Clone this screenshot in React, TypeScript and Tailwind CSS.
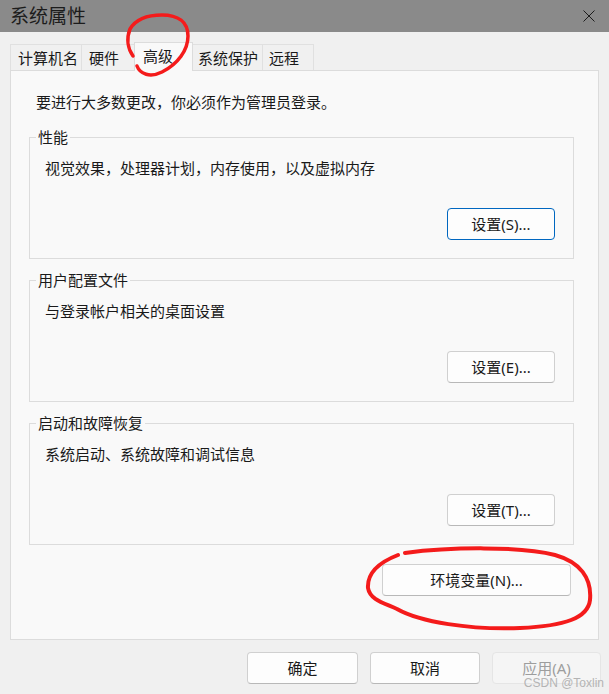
const font = "font-['Noto_Sans','Noto_Sans_CJK_SC',sans-serif]";

const tabs = [
  { label: "计算机名", w: "w-[72px] pl-[7px]", active: false },
  { label: "硬件", w: "w-[54px] pl-[7px]", active: false },
  { label: "高级", w: "w-[59px] pl-[8px]", active: true },
  { label: "系统保护", w: "w-[71px] pl-[5px]", active: false },
  { label: "远程", w: "w-[52px] pl-[6px]", active: false },
];

const groups = [
  { title: "性能", desc: "视觉效果，处理器计划，内存使用，以及虚拟内存", btn: "设置(S)...", focus: true },
  { title: "用户配置文件", desc: "与登录帐户相关的桌面设置", btn: "设置(E)...", focus: false },
  { title: "启动和故障恢复", desc: "系统启动、系统故障和调试信息", btn: "设置(T)...", focus: false },
];

const Button = ({ label, focus, disabled, className }: { label: string; focus?: boolean; disabled?: boolean; className: string }) => (
  <div
    className={`h-[32px] flex items-center justify-center rounded-[4px] border text-[15px] leading-[20px] ${
      disabled
        ? "bg-[#f5f5f5] border-[#e5e5e5] text-[#9d9d9d]"
        : focus
        ? "bg-[#fdfdfd] border-[#0067c0] text-[#1a1a1a]"
        : "bg-[#fdfdfd] border-[#d0d0d0] border-b-[#b8b8b8] text-[#1a1a1a]"
    } ${className}`}
  >
    {label}
  </div>
);

const App = () => {
  return (
    <div className={`relative w-[609px] h-[694px] bg-[#f0f0f0] overflow-hidden flex flex-col ${font} text-[#1a1a1a]`}>
      {/* title bar */}
      <div className="h-[32px] bg-[#8a8a8a] flex items-center justify-between pl-[10px] pr-[14px]">
        <div className="text-[19px] leading-[24px] text-[#1c1c1c]">系统属性</div>
        <svg width="12" height="12" viewBox="0 0 12 12" className="mb-[1px]">
          <path d="M0.5 0.5 L11.5 11.5 M11.5 0.5 L0.5 11.5" stroke="#1c1c1c" strokeWidth="1" fill="none" />
        </svg>
      </div>

      {/* tabs */}
      <div className="relative z-10 mt-[10px] h-[29px] -mb-[1px] flex items-end pl-[10px]">
        {tabs.map((t, i) => (
          <div
            key={t.label}
            className={`${t.w} ${i > 0 ? "-ml-[1px]" : ""} flex items-center text-[15px] leading-[20px] border-t border-l border-r ${
              t.active
                ? "relative z-10 h-[29px] bg-[#f9f9f9] border-[#dcdcdc] pb-[2px]"
                : "h-[26px] mb-[1px] bg-[#f0f0f0] border-[#e0e0e0]"
            }`}
          >
            {t.label}
          </div>
        ))}
      </div>

      {/* panel */}
      <div className="mx-[10px] h-[570px] border border-[#dcdcdc] bg-[#f9f9f9] pt-[21px] pl-[18px] pr-[24px]">
        <div className="pl-[7px] text-[15px] leading-[20px]">要进行大多数更改，你必须作为管理员登录。</div>
        <div className="mt-[25px] flex flex-col gap-[21px]">
          {groups.map((g) => (
            <div key={g.title} className="relative h-[122px] border border-[#dcdcdc] pt-[20px] pl-[15px] pr-[18px]">
              <div className="absolute top-[-11px] left-[6px] px-[2px] bg-[#f9f9f9] text-[15px] leading-[20px]">{g.title}</div>
              <div className="text-[15px] leading-[20px]">{g.desc}</div>
              <div className="mt-[30px] flex justify-end">
                <Button label={g.btn} focus={g.focus} className="w-[108px]" />
              </div>
            </div>
          ))}
        </div>
        <div className="mt-[19px] flex justify-end pr-[3px]">
          <Button label="环境变量(N)..." className="w-[189px]" />
        </div>
      </div>

      {/* bottom buttons */}
      <div className="mt-[12px] flex justify-end gap-[12px] pr-[8px]">
        <Button label="确定" className="w-[111px]" />
        <Button label="取消" className="w-[110px]" />
        <Button label="应用(A)" disabled className="w-[109px]" />
      </div>

      {/* watermark */}
      <div className="absolute right-[5px] bottom-[5px] text-[12px] leading-[12px] text-[#b4b4b4] font-['Liberation_Sans',sans-serif]">
        CSDN @Toxlin
      </div>

      {/* red annotations */}
      <svg className="absolute inset-0 z-20 pointer-events-none" width="609" height="694" viewBox="0 0 609 694">
        <path
          d="M137 66 C140 74 150 78 162 72 C178 64 188 50 188 36 C188 22 178 15 162 15 C148 15 136 19 130 29 C126 39 128 49 133 56"
          stroke="#f41b1b"
          strokeWidth="3.5"
          fill="none"
          strokeLinecap="round"
        />
        <path
          d="M405 553 C450 547 520 546 555 555 C580 562 592 578 590 600 C588 618 565 626 520 628 C470 630 420 622 397 609 C384 603 370 600 368 588 C367 572 380 562 398 555"
          stroke="#f41b1b"
          strokeWidth="4"
          fill="none"
          strokeLinecap="round"
        />
      </svg>
    </div>
  );
};

export default App;
